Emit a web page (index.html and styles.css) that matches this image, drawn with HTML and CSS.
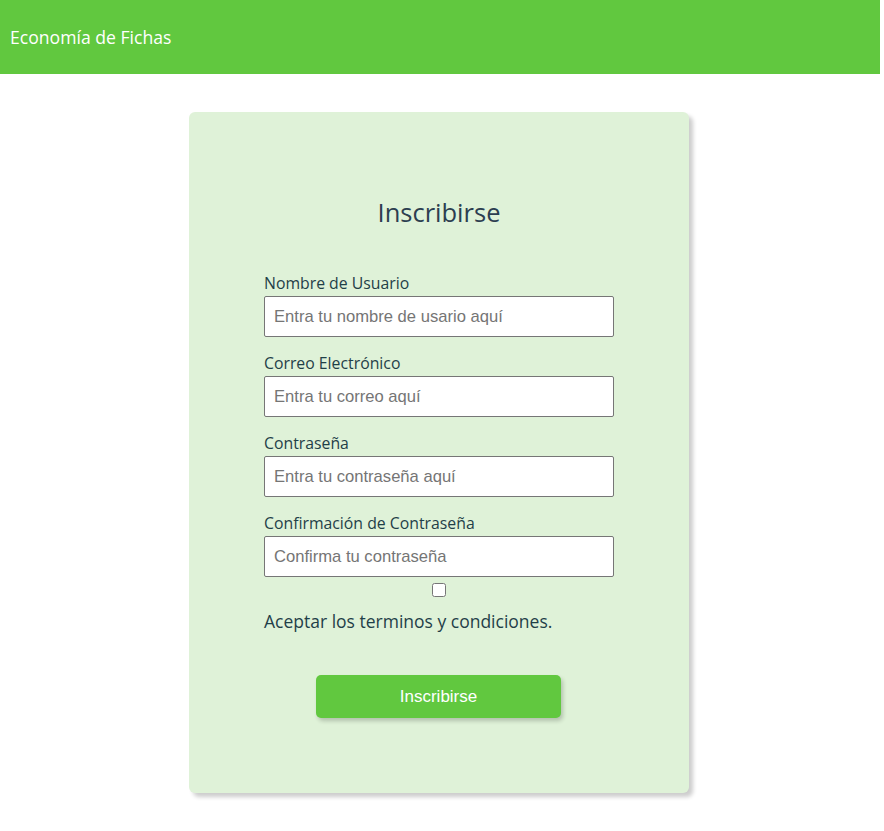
FILE: index.html
```html
<!DOCTYPE html>
<html lang="es">
<head>
<meta charset="utf-8">
<title>Economía de Fichas</title>
<link rel="stylesheet" href="styles.css">
</head>
<body>
<div class="app">
<header class="topbar">
  <span class="brand">Economía de Fichas</span>
</header>
<main class="page">
  <section class="card">
    <h2 class="card-title">Inscribirse</h2>
    <form class="form">
      <label class="field-label" for="u">Nombre de Usuario</label>
      <input class="field-input" id="u" type="text" placeholder="Entra tu nombre de usario aquí">
      <label class="field-label" for="e">Correo Electrónico</label>
      <input class="field-input" id="e" type="email" placeholder="Entra tu correo aquí">
      <label class="field-label" for="p">Contraseña</label>
      <input class="field-input" id="p" type="password" placeholder="Entra tu contraseña aquí">
      <label class="field-label" for="c">Confirmación de Contraseña</label>
      <input class="field-input field-last" id="c" type="password" placeholder="Confirma tu contraseña">
      <input class="terms-check" type="checkbox" id="t">
      <label class="terms-label" for="t">Aceptar los terminos y condiciones.</label>
      <button class="submit" type="button">Inscribirse</button>
    </form>
  </section>
</main>
</div>
</body>
</html>
```

FILE: styles.css
```css
* { box-sizing: border-box; }
html, body { margin: 0; padding: 0; background: #ffffff; }
body { font-family: "Open Sans", "Noto Sans", sans-serif; color: #2c3e50; }

.app { width: 880px; }

.topbar {
  height: 74px;
  background: #61c83f;
  display: flex;
  align-items: center;
  padding: 0 10px;
}
.brand {
  color: #ffffff;
  font-size: 17.6px;
  line-height: 24px;
  margin-top: -1px;
}

.page {
  display: flex;
  justify-content: center;
  padding: 38px 2px 30px 0;
}
.card {
  width: 500px;
  background: #dff2d8;
  border-radius: 6px;
  box-shadow: 4px 4px 4px rgba(0, 0, 0, 0.2);
  padding: 83px 75px 75px;
}
.card-title {
  margin: 0 0 43px;
  text-align: center;
  font-weight: 400;
  font-size: 25.5px;
  line-height: 35px;
  color: #2c3e50;
}
.form {
  display: flex;
  flex-direction: column;
}
.field-label {
  font-size: 15.8px;
  line-height: 21px;
  margin-bottom: 2px;
  color: #1f4048;
}
.field-input {
  height: 41px;
  border: 1px solid #767676;
  border-radius: 2px;
  background: #ffffff;
  padding: 0 9px;
  font-family: "Liberation Sans", Arial, sans-serif;
  font-size: 16.6px;
  color: #222;
  margin: 0 0 16px;
}
.field-input::placeholder { color: #757575; }
.field-last { margin-bottom: 0; }
.terms-check {
  align-self: center;
  width: 14px;
  height: 14px;
  margin: 6px 0 0;
}
.terms-label {
  font-size: 17.5px;
  line-height: 24px;
  margin-top: 12px;
  color: #1f4048;
}
.submit {
  align-self: center;
  width: 245px;
  height: 43px;
  margin-top: 42px;
  margin-right: 1px;
  background: #61c83f;
  border: none;
  border-radius: 5px;
  box-shadow: 2px 3px 4px rgba(0, 0, 0, 0.2);
  color: #ffffff;
  font-family: "Liberation Sans", Arial, sans-serif;
  font-size: 17px;
}
```
